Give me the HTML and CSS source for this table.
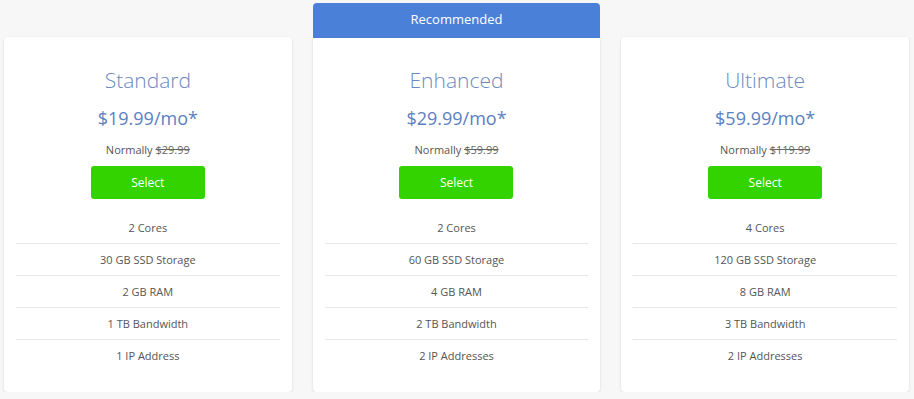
FILE: index.html
```html
<!DOCTYPE html>
<html>
<head>
<meta charset="utf-8">
<link rel="stylesheet" href="styles.css">
</head>
<body>
<div class="plans">
  <div class="plan">
    <div class="card">
      <h2 class="name">Standard</h2>
      <div class="price">$19.99/mo*</div>
      <div class="normal">Normally <s>$29.99</s></div>
      <button class="select">Select</button>
      <ul class="features">
        <li>2 Cores</li>
        <li>30 GB SSD Storage</li>
        <li>2 GB RAM</li>
        <li>1 TB Bandwidth</li>
        <li>1 IP Address</li>
      </ul>
    </div>
  </div>
  <div class="plan">
    <div class="ribbon">Recommended</div>
    <div class="card card-rec">
      <h2 class="name">Enhanced</h2>
      <div class="price">$29.99/mo*</div>
      <div class="normal">Normally <s>$59.99</s></div>
      <button class="select">Select</button>
      <ul class="features">
        <li>2 Cores</li>
        <li>60 GB SSD Storage</li>
        <li>4 GB RAM</li>
        <li>2 TB Bandwidth</li>
        <li>2 IP Addresses</li>
      </ul>
    </div>
  </div>
  <div class="plan">
    <div class="card">
      <h2 class="name">Ultimate</h2>
      <div class="price">$59.99/mo*</div>
      <div class="normal">Normally <s>$119.99</s></div>
      <button class="select">Select</button>
      <ul class="features">
        <li>4 Cores</li>
        <li>120 GB SSD Storage</li>
        <li>8 GB RAM</li>
        <li>3 TB Bandwidth</li>
        <li>2 IP Addresses</li>
      </ul>
    </div>
  </div>
</div>
</body>
</html>
```
FILE: styles.css
```css
html, body {
  margin: 0;
  padding: 0;
  background: #f7f7f7;
  font-family: "Open Sans", "Liberation Sans", sans-serif;
}
.plans {
  display: grid;
  grid-template-columns: 1fr 1fr 1fr;
  column-gap: 21px;
  padding: 3px 5px 0 4px;
  align-items: end;
}
.plan {
  display: flex;
  flex-direction: column;
}
.ribbon {
  height: 35px;
  line-height: 33px;
  background: #4b80d8;
  color: #fff;
  text-align: center;
  font-size: 13px;
  border-radius: 4px 4px 0 0;
}
.card {
  background: #fff;
  border-radius: 4px;
  box-shadow: 0 1px 3px rgba(0, 0, 0, 0.12);
  padding: 28px 12px 21px;
  display: flex;
  flex-direction: column;
  align-items: center;
  text-align: center;
}
.card-rec {
  border-radius: 0 0 4px 4px;
  padding-top: 27px;
}
.name {
  margin: 0;
  font-weight: 300;
  font-size: 21px;
  line-height: 30px;
  color: #6b89bf;
}
.price {
  margin-top: 11px;
  font-size: 18px;
  line-height: 24px;
  color: #5b80c2;
}
.normal {
  margin-top: 12px;
  font-size: 11px;
  line-height: 16px;
  color: #555;
}
.normal s {
  color: #666;
}
.select {
  margin-top: 8px;
  width: 114px;
  height: 33px;
  border: 0;
  border-radius: 3px;
  background: #33d300;
  color: #fff;
  font-family: "Open Sans", "Liberation Sans", sans-serif;
  font-size: 12px;
  padding: 0;
}
.features {
  list-style: none;
  margin: 13px 0 0;
  padding: 0;
  width: 100%;
}
.features li {
  font-size: 11px;
  line-height: 31px;
  color: #555;
}
.features li + li {
  border-top: 1px solid #e6e6e6;
}
```
